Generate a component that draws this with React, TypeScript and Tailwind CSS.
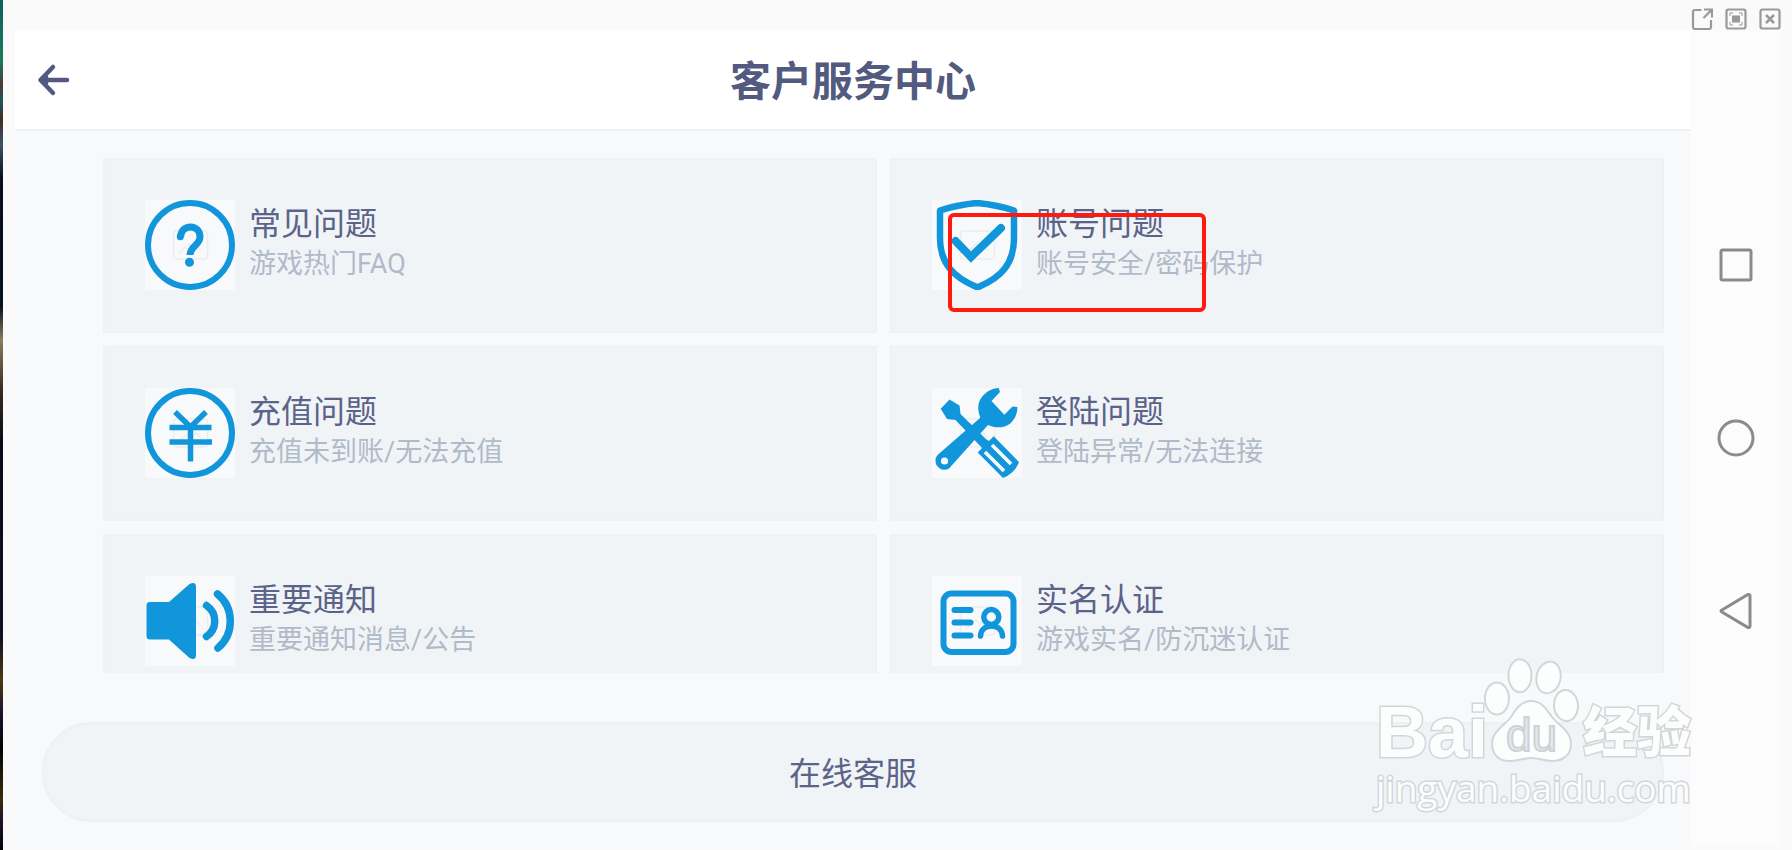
import { ReactNode } from 'react'
import clsx from 'clsx'

const BLUE = '#1296db'

type Entry = {
  title: string
  desc: string
  icon: ReactNode
  marked?: boolean
}

const entries: Entry[] = [
  { title: '常见问题', desc: '游戏热门FAQ', icon: <QuestionIcon /> },
  { title: '账号问题', desc: '账号安全/密码保护', icon: <ShieldIcon />, marked: true },
  { title: '充值问题', desc: '充值未到账/无法充值', icon: <YenIcon /> },
  { title: '登陆问题', desc: '登陆异常/无法连接', icon: <ToolsIcon /> },
  { title: '重要通知', desc: '重要通知消息/公告', icon: <SpeakerIcon /> },
  { title: '实名认证', desc: '游戏实名/防沉迷认证', icon: <IdCardIcon /> },
]

// 90x90 tile with the faint image placeholder under every icon
function Tile({ children }: { children: ReactNode }) {
  return (
    <svg viewBox="0 0 90 90" className="size-[90px] shrink-0 bg-[#f8f9fb]" fill="none" aria-hidden="true">
      <rect x="28.5" y="31" width="34" height="28" rx="3" stroke="#ededef" strokeWidth="1.5" />
      <path d="M34 53l10-9 4 4 3-3 5 5" stroke="#ededef" strokeWidth="1.5" />
      {children}
    </svg>
  )
}

function QuestionIcon() {
  return (
    <Tile>
      <circle cx="45" cy="45" r="42" stroke={BLUE} strokeWidth="6" />
      <path
        d="M35.5 37C36 30.5 40 27 45.5 27C51 27 55 31 55 37C55 45 45 46 45 55"
        stroke={BLUE}
        strokeWidth="7"
      />
      <circle cx="35.3" cy="36.7" r="3.5" fill={BLUE} />
      <circle cx="44.5" cy="62.3" r="4.5" fill={BLUE} />
    </Tile>
  )
}

function ShieldIcon() {
  return (
    <Tile>
      <path
        d="M45 3C57 4 70 6.500 82 10.500V38C82 64 69 77 47.500 86.500Q45.500 87.500 43.500 86.500C22 77 8 64 8 38V10.500C20 6.500 33 4 45 3Z"
        stroke={BLUE}
        strokeWidth="6.5"
        strokeLinejoin="round"
      />
      <path d="M23.500 41L39 57L69 28" stroke={BLUE} strokeWidth="8" strokeLinecap="round" />
    </Tile>
  )
}

function YenIcon() {
  return (
    <Tile>
      <circle cx="45" cy="45" r="42" stroke={BLUE} strokeWidth="6" />
      <path d="M30 24L45.500 39L61 24M24.500 39.500H66.500M24.500 54H67M45.500 38V73.500" stroke={BLUE} strokeWidth="5.500" />
    </Tile>
  )
}

function ToolsIcon() {
  return (
    <Tile>
      <path d="M17.500 11.500L27.500 17.500L28.500 26L58 55L51 61L23.500 32L15 31L8.700 20.700Z" fill={BLUE} />
      <path d="M61.700 48.300L87 74Q83 85 71 90L45.700 64.500L51.500 58.500L49.500 56.500L54.500 51.500L57 53Z" fill={BLUE} />
      <path d="M60 57L79 76M53 64L72 83" stroke="#f8f9fb" strokeWidth="3.600" />
      <path
        d="M66.700 0L68 4L59.500 13L72.300 26.700L80.500 18.500L85.300 19C85.500 26 83 31 78 35.700C72 40 64 40.500 56 37L17 80.500A9 9 0 0 1 5.500 67L48.300 29.700C44 18 47 11 53 5.700C57 2 61 0.500 66.700 0Z"
        fill={BLUE}
      />
      <circle cx="12.500" cy="73" r="3.600" fill="#f8f9fb" />
    </Tile>
  )
}

function SpeakerIcon() {
  return (
    <Tile>
      <path
        d="M5 26H24L44.500 8Q51 5 51 11V79Q51 85 44.500 82L24 63.500H5Q1.500 63.500 1.500 60V29.500Q1.500 26 5 26Z"
        fill={BLUE}
      />
      <path
        d="M61.500 29.500C72.500 37 72.500 53 61.500 60.500M72.500 18C89.500 32 89.500 58 73 72"
        stroke={BLUE}
        strokeWidth="7.500"
        strokeLinecap="round"
      />
    </Tile>
  )
}

function IdCardIcon() {
  return (
    <Tile>
      <rect x="11.500" y="17.500" width="70" height="58.500" rx="8" stroke={BLUE} strokeWidth="6" />
      <path d="M22.500 34H38.500M22.500 46.500H38.500M22.500 59.500H38.500" stroke={BLUE} strokeWidth="6" strokeLinecap="round" />
      <circle cx="59.300" cy="41" r="7.500" stroke={BLUE} strokeWidth="5.500" />
      <path d="M48.500 60C49 46.500 70 46.500 70.500 60" stroke={BLUE} strokeWidth="5.500" strokeLinecap="round" />
    </Tile>
  )
}

function WindowBar() {
  return (
    <div className="flex h-[30px] shrink-0 items-end justify-end gap-3 pr-[11px]">
      <button aria-label="弹出窗口">
        <svg viewBox="0 0 22 22" className="size-[22px]" fill="none" stroke="#999999" strokeWidth="2.200">
          <path d="M10.500 2H4Q2 2 2 4V19Q2 21 4 21H18Q20 21 20 19V12" />
          <path d="M13 1.500H21V9.500M20.500 2L12.500 10" />
        </svg>
      </button>
      <button aria-label="全屏">
        <svg viewBox="0 0 22 22" className="size-[22px]" fill="none" stroke="#999999" strokeWidth="2.200">
          <rect x="1.500" y="1.500" width="19" height="19" rx="2" />
          <path d="M5 8V5H8M14 5H17V8M17 14V17H14M8 17H5V14" strokeWidth="1" />
          <rect x="7.500" y="8" width="7" height="6" fill="#999999" strokeWidth="1" />
        </svg>
      </button>
      <button aria-label="关闭">
        <svg viewBox="0 0 22 22" className="size-[22px]" fill="none" stroke="#999999" strokeWidth="2.200">
          <rect x="1.500" y="1.500" width="19" height="19" rx="2" />
          <path d="M7 7L15 15M15 7L7 15" strokeWidth="2.500" />
        </svg>
      </button>
    </div>
  )
}

function PhoneKeys() {
  return (
    <nav className="flex w-[90px] shrink-0 flex-col items-center justify-center gap-[133px] bg-[#fcfcfc]">
      <button aria-label="最近任务">
        <svg viewBox="0 0 40 40" className="size-10" fill="none" stroke="#8b8b8b" strokeWidth="3">
          <rect x="5" y="5" width="30" height="30" rx="1.500" />
        </svg>
      </button>
      <button aria-label="主页">
        <svg viewBox="0 0 40 40" className="size-10" fill="none" stroke="#8b8b8b" strokeWidth="3">
          <circle cx="20" cy="20" r="17" />
        </svg>
      </button>
      <button aria-label="返回">
        <svg viewBox="0 0 40 40" className="size-10" fill="none" stroke="#8b8b8b" strokeWidth="3">
          <path d="M5.500 19.200L32 3.500Q34 3 34 5V35Q34 37 32 36.500L5.500 20.800Q4.500 20 5.500 19.200Z" />
        </svg>
      </button>
    </nav>
  )
}

function Card({ title, desc, icon, marked }: Entry) {
  return (
    <a
      href="#"
      className="relative flex h-[175px] items-start gap-[14px] border-2 border-[#eff1f3] bg-[#f0f4f7] p-10"
    >
      {icon}
      <div className="pt-1">
        <p className="text-[32px] leading-10 text-[#5c6389]">{title}</p>
        <p className="text-[27px] leading-10 text-[#b1bac9]">{desc}</p>
      </div>
      {marked && (
        <span className="absolute left-14 top-[53px] h-[99px] w-[258px] rounded-md border-4 border-[#ff1a0f]" />
      )}
    </a>
  )
}

const outlined = '[-webkit-text-stroke:3px_#d3d6d9] [paint-order:stroke_fill] text-[#fcfdfd]'

function Watermark() {
  return (
    <div className="pointer-events-none absolute bottom-9 right-24 w-[320px]">
      <div className="flex items-end">
        <span className={clsx(outlined, "font-['Liberation_Sans'] text-[72px] font-bold leading-[60px]")}>Bai</span>
        <div className="relative -ml-1 shrink-0">
          <svg viewBox="0 0 95 104" className="h-[104px] w-[95px]" fill="#fcfdfd" stroke="#d3d6d9" strokeWidth="2">
            <ellipse cx="12.900" cy="40.500" rx="12" ry="16" />
            <ellipse cx="36" cy="17.700" rx="11.500" ry="16.500" />
            <ellipse cx="64.500" cy="19.500" rx="12" ry="16" transform="rotate(12 64.5 19.5)" />
            <ellipse cx="82" cy="47.500" rx="12" ry="15.500" transform="rotate(-5 82 47.5)" />
            <path d="M47 43C58 43 63 52 68 59C75 68 87 73 87 86C87 97 79 103 68 103C60 103 55 100 47 100C39 100 34 103 25 103C14 103 8 96 8 85C8 74 20 68 27 59C32 51 37 43 47 43Z" />
          </svg>
          <span className="absolute inset-x-0 bottom-1 text-center font-['Liberation_Sans'] text-[46px] leading-[46px] text-[#e6eaed] [-webkit-text-stroke:2px_#ced2d6]">
            du
          </span>
        </div>
        <span className={clsx(outlined, 'ml-1 text-[54px] font-black leading-[56px]')}>经验</span>
      </div>
      <p className={clsx(outlined, "whitespace-nowrap font-['Open_Sans'] text-[37px] leading-[52px]")}>
        jingyan.baidu.com
      </p>
    </div>
  )
}

export default function App() {
  return (
    <div className="relative flex h-screen overflow-hidden bg-[#fafafa] font-['Roboto','Noto_Sans_CJK_SC',sans-serif]">
      <div className="w-[3px] shrink-0 bg-[linear-gradient(#0f5f5c_0%,#1c7a5f_7%,#4a3a30_10%,#1f5560_12%,#402a20_14%,#3c5566_17%,#0a0f1a_21%,#06101f_36%,#8a7c5c_40%,#3a2a20_46%,#0a0a14_52%,#15101c_75%,#4a3a14_80%,#1c1030_84%,#050304_88%,#3a2c0c_94%,#1c1028_97%,#050304_100%)]" />
      <div className="flex min-w-0 flex-1 flex-col">
        <WindowBar />
        <div className="flex min-h-0 flex-1 pb-[5px] pl-3 pr-[11px]">
          <main className="flex min-w-0 flex-1 flex-col bg-[#f8f9fb]">
            <header className="grid h-[101px] shrink-0 grid-cols-[1fr_auto_1fr] items-center border-b-2 border-[#f1f2f4] bg-white px-5">
              <button aria-label="返回" className="justify-self-start">
                <svg
                  viewBox="0 0 36 36"
                  className="size-9"
                  fill="none"
                  stroke="#535a80"
                  strokeWidth="4.500"
                  strokeLinecap="round"
                  strokeLinejoin="round"
                >
                  <path d="M32 18H5.500M18 5L5.500 18L18 31M11 15V21" />
                </svg>
              </button>
              <h1 className="pt-1 text-[41px] font-bold leading-[60px] text-[#535a80]">客户服务中心</h1>
            </header>
            <section className="min-h-0 flex-1 overflow-hidden pl-[88px] pr-[27px] pt-[27px]">
              <div className="grid grid-cols-2 gap-[13px]">
                {entries.map((e) => (
                  <Card key={e.title} {...e} />
                ))}
              </div>
            </section>
            <footer className="shrink-0 px-[27px] pb-[23px] pt-[49px]">
              <button className="h-[100px] w-full rounded-full border-2 border-[#eff0f2] bg-[#f0f4f7] pt-1 text-[32px] text-[#5c6389]">
                在线客服
              </button>
            </footer>
          </main>
          <PhoneKeys />
        </div>
      </div>
      <Watermark />
    </div>
  )
}
